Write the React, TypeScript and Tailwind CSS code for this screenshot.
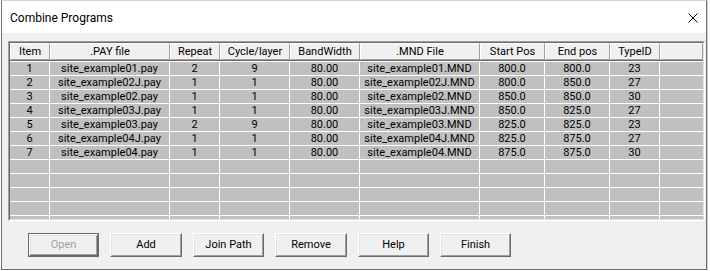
import React from "react";

const cols = [40, 120, 50, 70, 70, 120, 65, 65, 50, 43];
const headers = ["Item", ".PAY file", "Repeat", "Cycle/layer", "BandWidth", ".MND File", "Start Pos", "End pos", "TypeID", ""];
const rows: string[][] = [
  ["1", "site_example01.pay", "2", "9", "80.00", "site_example01.MND", "800.0", "800.0", "23", ""],
  ["2", "site_example02J.pay", "1", "1", "80.00", "site_example02J.MND", "800.0", "850.0", "27", ""],
  ["3", "site_example02.pay", "1", "1", "80.00", "site_example02.MND", "850.0", "850.0", "30", ""],
  ["4", "site_example03J.pay", "1", "1", "80.00", "site_example03J.MND", "850.0", "825.0", "27", ""],
  ["5", "site_example03.pay", "2", "9", "80.00", "site_example03.MND", "825.0", "825.0", "23", ""],
  ["6", "site_example04J.pay", "1", "1", "80.00", "site_example04J.MND", "825.0", "875.0", "27", ""],
  ["7", "site_example04.pay", "1", "1", "80.00", "site_example04.MND", "875.0", "875.0", "30", ""],
];
const allRows = [...rows, ...Array.from({ length: 5 }, () => Array(10).fill(""))];

function Btn({ label, w, disabled, isDefault }: { label: string; w: number; disabled?: boolean; isDefault?: boolean }) {
  const inner = (
    <div className="flex-1 flex border-t border-l border-t-white border-l-white border-b border-r border-b-[#696969] border-r-[#696969]">
      <div className="flex-1 flex items-center justify-center border-t border-l border-t-[#e3e3e3] border-l-[#e3e3e3] border-b border-r border-b-[#a0a0a0] border-r-[#a0a0a0] bg-[#f0f0f0]">
        <span className={disabled ? "text-[#a0a0a0]" : "text-black"}>{label}</span>
      </div>
    </div>
  );
  return (
    <div style={{ width: w }} className={"h-[24px] flex " + (isDefault ? "border border-[#696969]" : "")}>
      {inner}
    </div>
  );
}

export default function App() {
  return (
    <div className="w-[710px] h-[271px] bg-white font-['Roboto',sans-serif] text-[11px] text-black overflow-hidden">
      <div className="ml-[1px] w-[706px] h-[270px] border border-[#707070] border-t-[#d4d4d4] bg-[#f0f0f0] flex flex-col shadow-[1px_0_0_#d0d0d0]">
        <div className="h-[32px] bg-white flex items-center justify-between pl-[8px] pr-[8px]">
          <span className="text-[12px] pt-[1px]">Combine Programs</span>
          <svg width="10" height="10" viewBox="0 0 10 10" className="mt-[1px]">
            <path d="M0.5 0.5 L9.5 9.5 M9.5 0.5 L0.5 9.5" stroke="#000" strokeWidth="1" fill="none" />
          </svg>
        </div>
        <div className="flex-1 flex flex-col pt-[8px] pl-[6px]">
          <div className="w-[697px] h-[180px] border-t border-l border-t-[#a0a0a0] border-l-[#a0a0a0] border-b border-r border-b-white border-r-white flex">
            <div className="flex-1 border-t border-l border-t-[#696969] border-l-[#696969] border-b border-r border-b-[#e3e3e3] border-r-[#e3e3e3] bg-[#c0c0c0] overflow-hidden flex flex-col">
              <div className="flex h-[18px] border-b border-b-[#696969] shrink-0">
                {headers.map((h, i) => (
                  <div
                    key={i}
                    style={{ width: cols[i] }}
                    className="h-[17px] shrink-0 bg-[#f0f0f0] border-t border-l border-t-white border-l-white border-r border-b border-r-[#a0a0a0] border-b-[#a0a0a0] flex items-center justify-center leading-[15px]"
                  >
                    {h}
                  </div>
                ))}
              </div>
              <div className="border-t border-t-white">
                {allRows.map((r, ri) => (
                  <div key={ri} className="flex h-[14px] border-b border-b-white">
                    {r.map((c, ci) => (
                      <div
                        key={ci}
                        style={{ width: cols[ci] }}
                        className={"h-[13px] shrink-0 flex items-center justify-center leading-[13px] " + (ci < 9 ? "border-r border-r-white" : "")}
                      >
                        {c}
                      </div>
                    ))}
                  </div>
                ))}
              </div>
            </div>
          </div>
          <div className="flex gap-[11px] mt-[12px] pl-[20px]">
            <Btn label="Open" w={71} disabled isDefault />
            <Btn label="Add" w={72} />
            <Btn label="Join Path" w={71} />
            <Btn label="Remove" w={72} />
            <Btn label="Help" w={71} />
            <Btn label="Finish" w={71} />
          </div>
        </div>
      </div>
    </div>
  );
}
